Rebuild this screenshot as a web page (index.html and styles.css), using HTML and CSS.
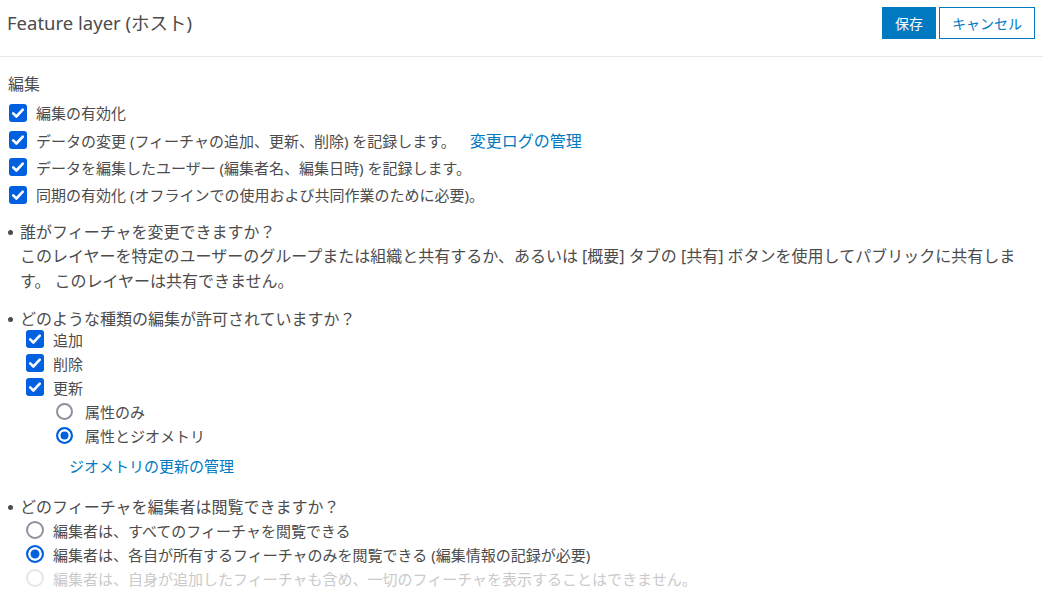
FILE: index.html
```html
<!DOCTYPE html>
<html lang="ja">
<head>
  <meta charset="UTF-8" />
  <meta name="viewport" content="width=device-width, initial-scale=1.0"/>
  <link rel="stylesheet" href="styles.css">
  <title>Feature layer (ホスト) - 設定</title>
</head>
<body>
  <header class="topbar">
    <h1 class="title">Feature layer (ホスト)</h1>
    <div class="actions">
      <button class="btn btn-primary" type="button">保存</button>
      <button class="btn btn-outline" type="button">キャンセル</button>
    </div>
  </header>

  <main class="content">
    <h2 class="section-title">編集</h2>

    <div class="option-list">
      <label class="option"><input type="checkbox" checked><span>編集の有効化</span></label>
      <label class="option"><input type="checkbox" checked><span>データの変更 (フィーチャの追加、更新、削除) を記録します。</span><a class="link link-log" href="#">変更ログの管理</a></label>
      <label class="option"><input type="checkbox" checked><span>データを編集したユーザー (編集者名、編集日時) を記録します。</span></label>
      <label class="option"><input type="checkbox" checked><span>同期の有効化 (オフラインでの使用および共同作業のために必要)。</span></label>
    </div>

    <ul class="questions">
      <li class="question q-who">
        <div class="question-text">誰がフィーチャを変更できますか？</div>
        <p class="note">このレイヤーを特定のユーザーのグループまたは組織と共有するか、あるいは [概要] タブの [共有] ボタンを使用してパブリックに共有します。 このレイヤーは共有できません。</p>
      </li>

      <li class="question q-kind">
        <div class="question-text">どのような種類の編集が許可されていますか？</div>
        <div class="sub-options">
          <label class="option small"><input type="checkbox" checked><span>追加</span></label>
          <label class="option small"><input type="checkbox" checked><span>削除</span></label>
          <label class="option small"><input type="checkbox" checked><span>更新</span></label>
          <div class="nested">
            <label class="option small"><input class="radio-sm" type="radio" name="update"><span>属性のみ</span></label>
            <label class="option small"><input class="radio-sm" type="radio" name="update" checked><span>属性とジオメトリ</span></label>
            <a class="link link-geom" href="#">ジオメトリの更新の管理</a>
          </div>
        </div>
      </li>

      <li class="question q-view">
        <div class="question-text">どのフィーチャを編集者は閲覧できますか？</div>
        <div class="sub-options">
          <label class="option small"><input type="radio" name="view"><span>編集者は、すべてのフィーチャを閲覧できる</span></label>
          <label class="option small"><input type="radio" name="view" checked><span>編集者は、各自が所有するフィーチャのみを閲覧できる (編集情報の記録が必要)</span></label>
          <label class="option small disabled"><input type="radio" name="view" disabled><span>編集者は、自身が追加したフィーチャも含め、一切のフィーチャを表示することはできません。</span></label>
        </div>
      </li>
    </ul>
  </main>
</body>
</html>
```

FILE: styles.css
```css
body {
  margin: 0;
  font-family: "Noto Sans", "Noto Sans CJK JP", sans-serif;
  color: #4c4c4c;
  background: #fff;
}

.topbar {
  display: flex;
  justify-content: space-between;
  align-items: center;
  height: 57px;
  padding: 0 8px 10px 7px;
  box-sizing: border-box;
  border-bottom: 1px solid #e8e8e8;
}

.title {
  margin: 0;
  font-size: 18.5px;
  font-weight: 400;
  line-height: 32px;
}

.actions {
  display: flex;
  gap: 3px;
}

.btn {
  height: 32px;
  padding: 0 12px;
  font-family: inherit;
  font-size: 14px;
  border: 1px solid #0079c1;
  cursor: pointer;
}

.btn-primary {
  background-color: #0079c1;
  color: #fff;
}

.btn-outline {
  background-color: #fff;
  color: #0079c1;
}

.content {
  padding: 0 8px;
}

.section-title {
  margin: 15px 0 3px 0;
  font-size: 16px;
  font-weight: 400;
  line-height: 24px;
}

.option {
  display: flex;
  align-items: center;
  height: 27.4px;
  font-size: 15px;
}

.option input {
  appearance: none;
  flex: none;
  box-sizing: border-box;
  width: 18px;
  height: 18px;
  margin: 0 9px 0 1px;
}

.option input[type="checkbox"] {
  border-radius: 3px;
  background: #0060df url("data:image/svg+xml,%3Csvg xmlns='http://www.w3.org/2000/svg' viewBox='0 0 18 18'%3E%3Cpath d='M4.2 9.4l3.2 3.1 6.4-6.8' fill='none' stroke='%23fff' stroke-width='2.6' stroke-linecap='round' stroke-linejoin='round'/%3E%3C/svg%3E") center / 18px 18px no-repeat;
}

.option input[type="radio"] {
  border-radius: 50%;
  border: 2px solid #8f8f9d;
  background: #fff;
}

.option input[type="radio"]:checked {
  border: 2px solid #0060df;
  background: #0060df;
  box-shadow: inset 0 0 0 2.5px #fff;
}

.option input[type="radio"]:disabled {
  border-color: #e6e6e6;
}

.option.small {
  height: 24px;
}

.option .radio-sm {
  width: 17px;
  height: 17px;
  margin-right: 12px;
}

.disabled {
  color: #cacaca;
}

.link {
  color: #0079c1;
  text-decoration: none;
}

.link-log {
  margin-left: 14px;
  font-size: 16px;
}

.questions {
  list-style: none;
  margin: 15.5px 0 0 0;
  padding: 0;
}

.question {
  position: relative;
  padding-left: 12px;
  font-size: 16px;
}

.question::before {
  content: "";
  position: absolute;
  left: 0;
  top: 6px;
  width: 5px;
  height: 5px;
  border-radius: 50%;
  background: #4c4c4c;
}

.question-text {
  line-height: 16px;
}

.note {
  margin: 4px 0 0 0;
  line-height: 25px;
}

.q-kind {
  margin-top: 17px;
}

.sub-options {
  padding-left: 5px;
}

.nested {
  padding-left: 30px;
}

.link-geom {
  display: block;
  margin: 9px 0 0 14px;
  font-size: 15px;
  line-height: 20px;
}

.q-view {
  margin-top: 23px;
}

.q-view .sub-options {
  margin-top: 3px;
}
```
